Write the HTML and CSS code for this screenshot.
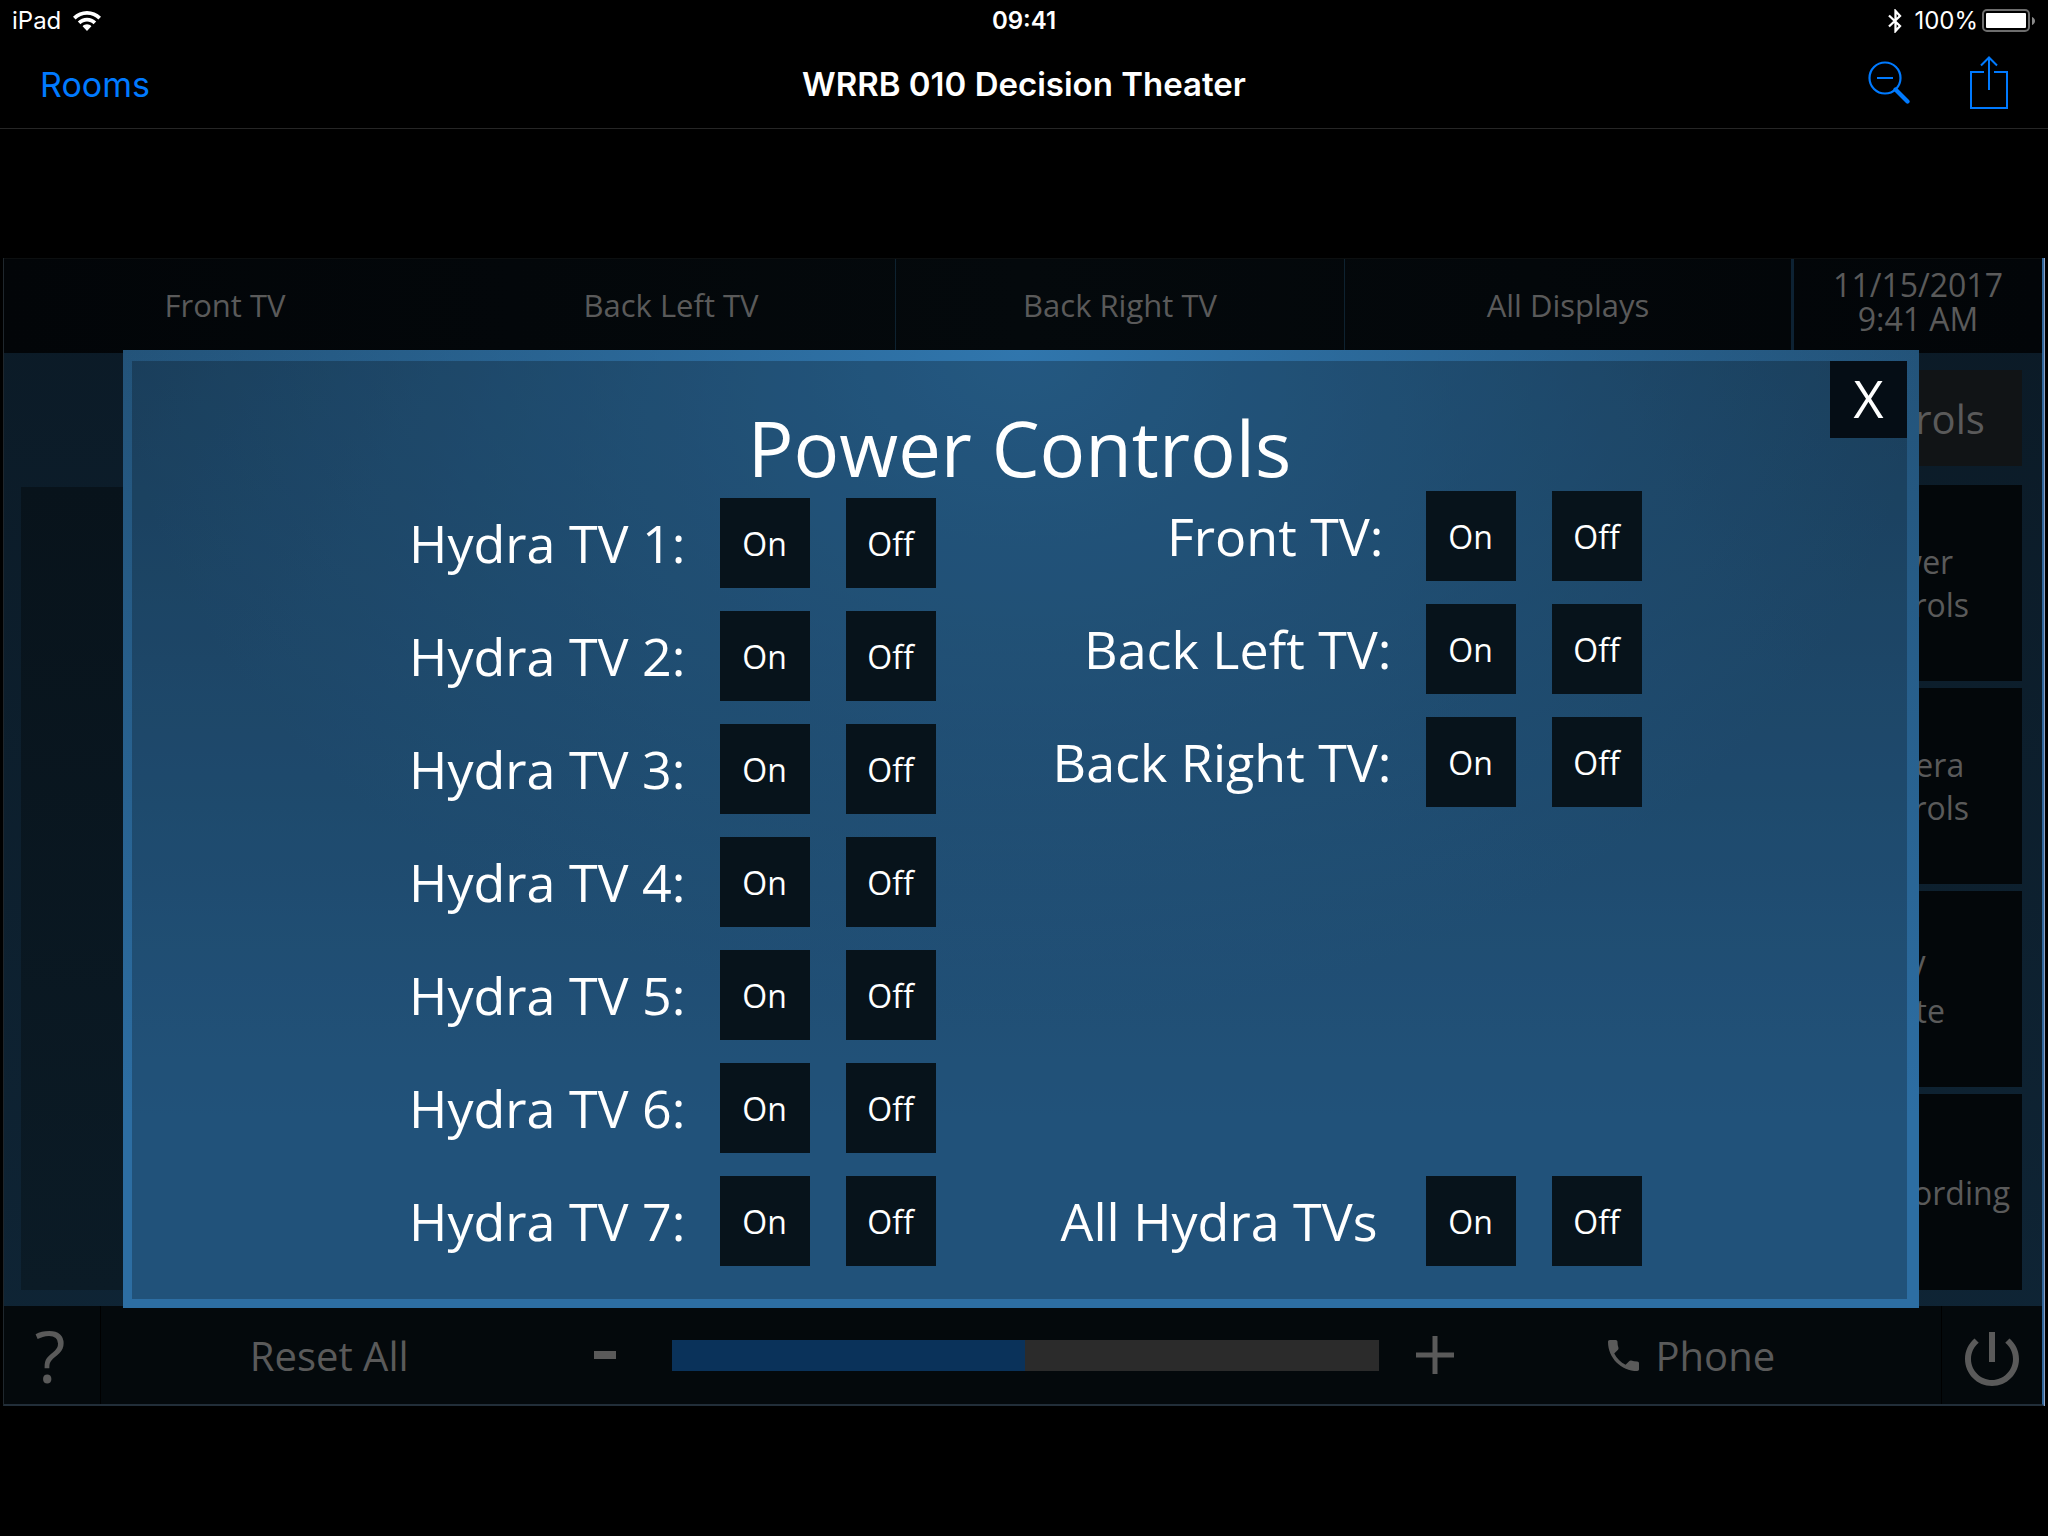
FILE: index.html
```html
<!DOCTYPE html>
<html lang="en">
<head>
<meta charset="utf-8">
<meta name="viewport" content="width=device-width, initial-scale=1">
<title>WRRB 010 Decision Theater</title>
<link rel="stylesheet" href="styles.css">
</head>
<body>
<div class="status">
  <div class="status-side">
    <span>iPad</span>
    <svg class="wifi" viewBox="0 0 28 20" width="28" height="20" aria-hidden="true">
      <path d="M14 0C8.700 0 3.800 2.100 0 5.700L2.600 8.400C5.600 5.500 9.600 3.800 14 3.800S22.400 5.500 25.400 8.400L28 5.700C24.200 2.100 19.300 0 14 0ZM14 6.700C10.500 6.700 7.200 8.100 4.800 10.500L7.500 13.200C9.200 11.500 11.500 10.500 14 10.500S18.800 11.500 20.500 13.200L23.200 10.500C20.800 8.100 17.500 6.700 14 6.700ZM14 13.300C12.300 13.300 10.800 14 9.600 15.200L14 20L18.400 15.200C17.200 14 15.700 13.300 14 13.300Z" fill="#fff"/>
    </svg>
  </div>
  <time class="clock">09:41</time>
  <div class="status-side status-right">
    <svg class="bluetooth" viewBox="0 0 14 24" width="14" height="24" aria-hidden="true">
      <path d="M1 6.500L12 17L7.500 22V2L12 7L1 17.500" fill="none" stroke="#fff" stroke-width="2.300"/>
    </svg>
    <span>100%</span>
    <svg class="battery" viewBox="0 0 54 24" width="54" height="24" aria-hidden="true">
      <rect x="1" y="1" width="46" height="21" rx="4" fill="none" stroke="#6d6d6d" stroke-width="2"/>
      <rect x="4" y="4" width="40" height="15" rx="1" fill="#fff"/>
      <path d="M50 8C54 9.500 54 14.500 50 16Z" fill="#8a8a8a"/>
    </svg>
  </div>
</div>
<header class="nav">
  <a class="nav-back" href="#rooms">Rooms</a>
  <h1 class="nav-title">WRRB 010 Decision Theater</h1>
  <div class="nav-actions">
    <button class="icon-button" type="button" aria-label="Zoom out">
      <svg viewBox="0 0 42 43" width="42" height="43">
        <circle cx="17" cy="17" r="15.500" fill="none" stroke="#007aff" stroke-width="2.200"/>
        <path d="M9 17H25" stroke="#007aff" stroke-width="2"/>
        <path d="M27.500 28.500L39.500 40.500" stroke="#007aff" stroke-width="4.200" stroke-linecap="round"/>
      </svg>
    </button>
    <button class="icon-button" type="button" aria-label="Share">
      <svg viewBox="0 0 38 53" width="38" height="53">
        <path d="M14 16H1V52H37V16H24M19 34V2M11 9.500L19 1.500L27 9.500" fill="none" stroke="#007aff" stroke-width="2"/>
      </svg>
    </button>
  </div>
</header>

<main class="panel">
  <div class="tabs">
    <button class="tab tab-first" type="button">Front TV</button>
    <button class="tab" type="button">Back Left TV</button>
    <button class="tab" type="button">Back Right TV</button>
    <button class="tab" type="button">All Displays</button>
    <div class="datetime"><span>11/15/2017</span><span>9:41 AM</span></div>
  </div>

  <div class="stage">
    <div class="preview"></div>
    <div class="sidebar">
      <div class="sidebar-title">Controls</div>
      <button class="side-button" type="button">Power<br>Controls</button>
      <button class="side-button" type="button">Camera<br>Controls</button>
      <button class="side-button" type="button">AV<br>Mute</button>
      <button class="side-button side-record" type="button">Recording</button>
    </div>
  </div>

  <div class="toolbar">
    <button class="tool tool-help" type="button">?</button>
    <button class="tool" type="button">Reset All</button>
    <button class="tool tool-minus" type="button" aria-label="Volume down">
      <svg viewBox="0 0 22 8" width="22" height="8"><path d="M0 4H22" stroke="#5a5a5a" stroke-width="8"/></svg>
    </button>
    <input class="volume" type="range" min="0" max="100" value="50" aria-label="Volume">
    <button class="tool" type="button" aria-label="Volume up">
      <svg viewBox="0 0 38 38" width="38" height="38"><path d="M19 0V38M0 19H38" stroke="#5a5a5a" stroke-width="5"/></svg>
    </button>
    <button class="tool tool-phone" type="button">
      <svg viewBox="3 3 18 18" width="31" height="31" aria-hidden="true"><path d="M6.620 10.790c1.440 2.830 3.760 5.140 6.590 6.590l2.200-2.200c.27-.27.67-.36 1.020-.24 1.120.37 2.330.57 3.570.57.55 0 1 .45 1 1V20c0 .55-.45 1-1 1-9.390 0-17-7.610-17-17 0-.55.45-1 1-1h3.500c.55 0 1 .45 1 1 0 1.250.2 2.450.57 3.570.11.350.03.74-.25 1.020l-2.200 2.200z" fill="#5a5a5a"/></svg>
      <span>Phone</span>
    </button>
    <button class="tool tool-power" type="button" aria-label="Power">
      <svg viewBox="3 3 18 18" width="54" height="54"><path d="M13 3h-2v10h2V3zm4.830 2.170l-1.420 1.420C17.990 7.860 19 9.810 19 12c0 3.870-3.130 7-7 7s-7-3.130-7-7c0-2.190 1.010-4.140 2.580-5.420L6.170 5.170C4.230 6.820 3 9.260 3 12c0 4.970 4.030 9 9 9s9-4.030 9-9c0-2.740-1.230-5.180-3.170-6.830z" fill="#5a5a5a"/></svg>
    </button>
  </div>

  <section class="dialog" role="dialog" aria-labelledby="dialog-title">
    <div class="dialog-body">
      <button class="close" type="button" aria-label="Close">X</button>
      <h2 class="dialog-title" id="dialog-title">Power Controls</h2>
      <div class="columns">
        <div class="column column-hydra">
          <div class="row"><span class="row-label">Hydra TV 1:</span><button class="switch" type="button">On</button><button class="switch" type="button">Off</button></div>
          <div class="row"><span class="row-label">Hydra TV 2:</span><button class="switch" type="button">On</button><button class="switch" type="button">Off</button></div>
          <div class="row"><span class="row-label">Hydra TV 3:</span><button class="switch" type="button">On</button><button class="switch" type="button">Off</button></div>
          <div class="row"><span class="row-label">Hydra TV 4:</span><button class="switch" type="button">On</button><button class="switch" type="button">Off</button></div>
          <div class="row"><span class="row-label">Hydra TV 5:</span><button class="switch" type="button">On</button><button class="switch" type="button">Off</button></div>
          <div class="row"><span class="row-label">Hydra TV 6:</span><button class="switch" type="button">On</button><button class="switch" type="button">Off</button></div>
          <div class="row"><span class="row-label">Hydra TV 7:</span><button class="switch" type="button">On</button><button class="switch" type="button">Off</button></div>
        </div>
        <div class="column column-displays">
          <div class="row row-loose"><span class="row-label">Front TV:</span><button class="switch" type="button">On</button><button class="switch" type="button">Off</button></div>
          <div class="row"><span class="row-label">Back Left TV:</span><button class="switch" type="button">On</button><button class="switch" type="button">Off</button></div>
          <div class="row"><span class="row-label">Back Right TV:</span><button class="switch" type="button">On</button><button class="switch" type="button">Off</button></div>
          <div class="row row-all"><span class="row-label">All Hydra TVs</span><button class="switch" type="button">On</button><button class="switch" type="button">Off</button></div>
        </div>
      </div>
    </div>
  </section>
</main>
</body>
</html>
```
FILE: styles.css
```css
* {
  box-sizing: border-box;
}

body {
  margin: 0;
  background: #000;
  color: #fff;
  font-family: Inter, "Liberation Sans", sans-serif;
}

button {
  margin: 0;
  padding: 0;
  border: 0;
  background: none;
  color: inherit;
  font: inherit;
}

svg {
  display: block;
}

/* Status bar */
.status {
  display: grid;
  grid-template-columns: 1fr auto 1fr;
  align-items: center;
  height: 42px;
  padding: 0 12px;
  font-size: 24px;
  line-height: 42px;
}

.status-side {
  display: flex;
  align-items: center;
  gap: 12px;
}

.status-right {
  justify-content: flex-end;
  gap: 4px;
}

.bluetooth {
  margin-right: 8px;
}

.clock {
  font-weight: 600;
}

/* Navigation bar */
.nav {
  display: grid;
  grid-template-columns: 1fr auto 1fr;
  align-items: center;
  height: 87px;
  padding: 0 40px 2px;
  border-bottom: 1px solid #262626;
  font-size: 34px;
}

.nav-back {
  color: #007aff;
  text-decoration: none;
}

.nav-title {
  margin: 0;
  font-size: 33px;
  font-weight: 600;
}

.nav-actions {
  display: flex;
  justify-content: flex-end;
  align-items: center;
  gap: 60px;
  padding-bottom: 4px;
}

/* Room panel */
.panel {
  position: relative;
  margin: 129px 4px 0 3px;
  border-right: 2px solid #33689c;
  border-bottom: 2px solid #222e39;
  border-left: 1px solid #1f272d;
  background: linear-gradient(#0b1a26, #0f2536);
  box-shadow: 1px 0 #8fa2c4;
  color: #5a5a5a;
  font-family: "Open Sans", "Noto Sans", sans-serif;
  font-size: 32px;
}

.tabs {
  display: grid;
  grid-template-columns: 443fr 449fr 449fr 449fr 248fr;
  height: 95px;
  border-top: 1px solid #0c0f10;
  background: linear-gradient(90deg, #020508, #04090c 50%, #020508);
}

.tab {
  padding-bottom: 2px;
  border-right: 1px solid #0e2230;
  font-size: 31px;
}

.tab-first {
  border-right-color: transparent;
}

.tab:nth-child(4) {
  border-right: 3px solid #0d2233;
}

.datetime {
  display: flex;
  flex-direction: column;
  justify-content: center;
  align-items: center;
  padding-bottom: 8px;
  line-height: 34px;
}

.stage {
  display: grid;
  grid-template-columns: 1fr 232px;
  gap: 20px;
  padding: 17px 20px 16px 17px;
}

.preview {
  margin-top: 117px;
  background: linear-gradient(#08131b, #0b1b26);
}

.sidebar {
  display: flex;
  flex-direction: column;
  gap: 7px;
}

.sidebar-title {
  height: 96px;
  margin-bottom: 12px;
  background: #111416;
  font-size: 40px;
  line-height: 98px;
  text-align: center;
}

.side-button {
  height: 196px;
  background: #03070a;
  line-height: 43px;
}

.side-record {
  padding-left: 58px;
}

.toolbar {
  display: grid;
  grid-template-columns: 97fr 457fr 115fr 707fr 112fr 451fr 101fr;
  align-items: stretch;
  height: 98px;
  background: #04090c;
  font-size: 40px;
}

.tool {
  display: flex;
  justify-content: center;
  align-items: center;
}

.tool-help {
  padding-right: 4px;
  border-right: 1px solid #000;
  font-size: 72px;
}

.tool-minus {
  padding-right: 20px;
}

.tool-phone {
  gap: 16px;
  padding-right: 48px;
}

.tool-power {
  padding-top: 8px;
  border-left: 1px solid #000;
}

.volume {
  align-self: center;
  width: 100%;
  height: 31px;
  margin: 0;
  background: linear-gradient(90deg, #0a325a 50%, #2b2b2b 50%);
  appearance: none;
}

.volume::-webkit-slider-thumb {
  width: 1px;
  height: 31px;
  appearance: none;
}

/* Power dialog */
.dialog {
  position: absolute;
  inset: 92px 123px 96px 119px;
  display: flex;
  padding: 11px 12px 9px 9px;
  background:
    radial-gradient(ellipse 50% 70% at 50% 0, #3076ad, transparent),
    linear-gradient(#235379, #2d6ea3 80%);
  color: #fff;
}

.dialog-body {
  flex: 1;
  padding-top: 43px;
  background: rgba(0, 0, 0, 0.25);
}

.close {
  position: absolute;
  top: 11px;
  right: 12px;
  width: 77px;
  height: 77px;
  padding-bottom: 4px;
  background: #050d15;
  font-size: 52px;
  line-height: 73px;
}

.dialog-title {
  margin: 0;
  font-size: 76px;
  font-weight: 400;
  line-height: 87px;
  text-align: center;
}

.columns {
  display: grid;
  grid-template-columns: 528px 586px;
  justify-content: center;
  gap: 120px;
  padding-left: 10px;
}

.column {
  display: flex;
  flex-direction: column;
  gap: 23px;
}

.column-hydra {
  padding-top: 7px;
}

.row {
  display: flex;
  justify-content: flex-end;
  align-items: center;
  gap: 34px;
}

.row-label {
  font-size: 52px;
  line-height: 90px;
  white-space: nowrap;
}

.row-loose .row-label {
  padding-right: 8px;
}

.row-all {
  margin-top: auto;
}

.row-all .row-label {
  padding-right: 14px;
}

.switch {
  flex: none;
  width: 90px;
  height: 90px;
  background: #07131b;
}

.switch + .switch {
  margin-left: 2px;
}
```
